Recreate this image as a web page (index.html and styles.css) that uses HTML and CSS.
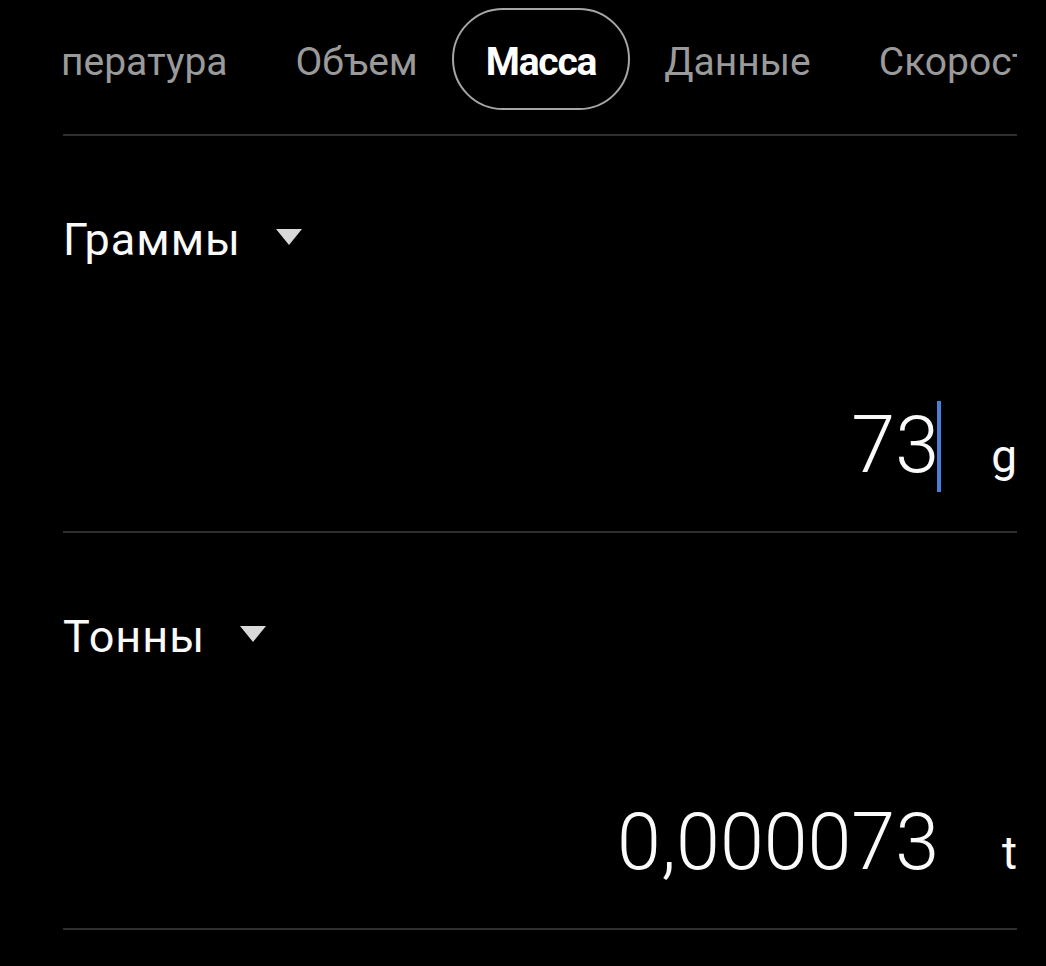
FILE: index.html
```html
<!DOCTYPE html>
<html lang="ru">
<head>
    <meta charset="UTF-8">
    <meta name="viewport" content="width=device-width, initial-scale=1.0">
    <title>Конвертер - Масса</title>
    <link rel="stylesheet" href="styles.css">
</head>
<body>
    <div class="converter">
        <div class="tabs">
            <div class="tabs-track">
                <div class="tab">Температура</div>
                <div class="tab">Объем</div>
                <div class="tab active">Масса</div>
                <div class="tab">Данные</div>
                <div class="tab">Скорость</div>
            </div>
        </div>

        <div class="unit-block">
            <div class="unit-select">
                <span class="unit-name">Граммы</span>
                <span class="arrow"></span>
            </div>
            <div class="value-row">
                <span class="value editing">73</span>
                <span class="unit-short">g</span>
            </div>
        </div>

        <div class="unit-block">
            <div class="unit-select">
                <span class="unit-name">Тонны</span>
                <span class="arrow"></span>
            </div>
            <div class="value-row">
                <span class="value">0,000073</span>
                <span class="unit-short">t</span>
            </div>
        </div>
    </div>
</body>
</html>
```

FILE: styles.css
```css
body {
    margin: 0;
    background-color: #000;
    font-family: Roboto, "Noto Sans", sans-serif;
    color: #fafafa;
}
.converter {
    width: 954px;
    margin-left: 63px;
}
.tabs {
    height: 134px;
    overflow: hidden;
    border-bottom: 2px solid #2e2e2e;
}
.tabs-track {
    display: flex;
    margin-top: 8px;
    margin-left: -107px;
    white-space: nowrap;
}
.tab {
    display: flex;
    align-items: center;
    box-sizing: border-box;
    height: 102px;
    padding: 6px 32px 0 32px;
    font-size: 39px;
    color: #9a9a9a;
    border: 2px solid transparent;
    border-radius: 52px;
}
.tab.active {
    color: #fff;
    font-weight: bold;
    letter-spacing: -1.2px;
    border-color: #a6a6a6;
}
.unit-block {
    padding: 83px 0 45px 0;
    border-bottom: 2px solid #2e2e2e;
}
.unit-select {
    display: flex;
    align-items: center;
    height: 42px;
}
.unit-name {
    font-size: 45px;
    line-height: 42px;
    letter-spacing: 1px;
}
.arrow {
    width: 0;
    height: 0;
    margin-left: 35px;
    margin-top: -6px;
    border-left: 13px solid transparent;
    border-right: 13px solid transparent;
    border-top: 16px solid #d9d9d9;
}
.value-row {
    display: flex;
    justify-content: flex-end;
    align-items: baseline;
    margin-top: 143px;
}
.value {
    position: relative;
    font-size: 79px;
    line-height: 82px;
    font-weight: 300;
}
.value.editing::after {
    content: "";
    position: absolute;
    right: -2px;
    top: -3px;
    width: 4px;
    height: 91px;
    background-color: #4a7fd6;
}
.unit-short {
    width: 78px;
    text-align: right;
    font-size: 46px;
}
```
